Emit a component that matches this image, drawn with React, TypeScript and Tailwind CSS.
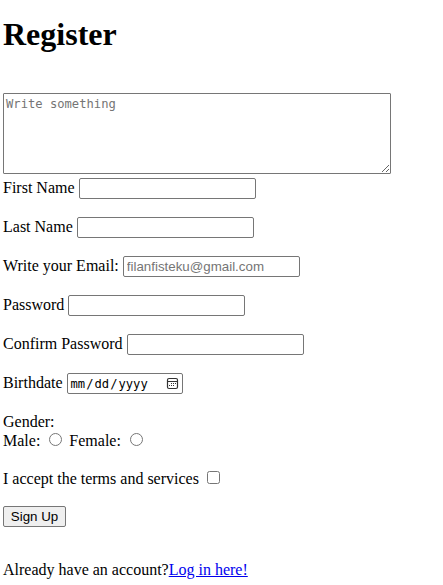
import type { InputHTMLAttributes } from 'react';

const fieldClass =
  'block h-[21px] w-[177px] rounded-[2px] border border-[#767676] bg-white px-[3px] font-["Liberation_Sans",Arial,sans-serif] text-[13.333px] leading-[15px] text-black outline-none placeholder:text-[#757575]';

type FieldProps = InputHTMLAttributes<HTMLInputElement> & { label: string };

function Field({ label, ...rest }: FieldProps) {
  return (
    <label className="flex h-[21px] w-fit gap-1">
      <span className="leading-[20px] whitespace-nowrap">{label}</span>
      <input className={fieldClass} {...rest} />
    </label>
  );
}

function CalendarIcon() {
  return (
    <svg className="mt-[3px] ml-auto size-[13px]" viewBox="0 0 13 13" fill="none" aria-hidden="true">
      <rect x="1.5" y="1.5" width="10" height="10" rx="1.5" stroke="#333" strokeWidth="1.2" />
      <path d="M1.5 4.5h10" stroke="#333" />
      <path d="M5 6.5h1M7 6.5h1M9 6.5h1M3 8.5h1M5 8.5h1M7 8.5h1" stroke="#333" />
    </svg>
  );
}

export default function App() {
  return (
    <main className='h-[585px] w-[443px] overflow-hidden bg-white pl-[3px] font-["Liberation_Serif","Times_New_Roman",serif] text-[16px] text-black'>
      <h1 className="pt-[16px] text-[32px] leading-[37px] font-bold">Register</h1>
      <form className="mt-[40px]" onSubmit={(e) => e.preventDefault()}>
        <textarea
          placeholder="Write something"
          className='block h-[81px] w-[388px] resize rounded-[1px] border border-[#767676] bg-white p-[2px] pt-[3px] font-["DejaVu_Sans_Mono",monospace] text-[12.17px] leading-[15px] outline-none placeholder:text-[#757575]'
        />
        <div className="mt-[4px] flex flex-col gap-[18px]">
          <Field label="First Name" type="text" />
          <Field label="Last Name" type="text" />
          <Field label="Write your Email:" type="email" placeholder="filanfisteku@gmail.com" />
          <Field label="Password" type="password" />
          <Field label="Confirm Password" type="password" />
          <div className="flex h-[21px] gap-1">
            <span className="leading-[20px]">Birthdate</span>
            <div className='flex h-[21px] w-[116px] rounded-[2px] border border-[#767676] px-[3px] font-["DejaVu_Sans_Mono",monospace] text-[12.17px] leading-[20px]'>
              <span>mm</span>
              <span className="px-[1px]">/</span>
              <span>dd</span>
              <span className="px-[1px]">/</span>
              <span>yyyy</span>
              <CalendarIcon />
            </div>
          </div>
        </div>
        <p className="mt-[18px] leading-[19px]">Gender:</p>
        <div className="flex h-[20px] leading-[20px]">
          <span>Male:</span>
          <input type="radio" name="gender" className="mt-[2px] ml-[9px] size-[13px]" />
          <span className="ml-[7px]">Female:</span>
          <input type="radio" name="gender" className="mt-[2px] ml-[9px] size-[13px]" />
        </div>
        <label className="mt-[18px] flex h-[20px] w-fit leading-[20px]">
          I accept the terms and services
          <input type="checkbox" className="mt-[2px] ml-[8px] size-[13px]" />
        </label>
        <button
          type="submit"
          className='mt-[17px] block h-[21px] w-[63px] rounded-[2px] border border-[#767676] bg-[#efefef] text-center font-["Liberation_Sans",Arial,sans-serif] text-[13.333px] leading-[19px]'
        >
          Sign Up
        </button>
      </form>
      <p className="mt-[34px] leading-[18px]">
        Already have an account?
        <a href="#" className="text-[#0000ee] underline">Log in here!</a>
      </p>
    </main>
  );
}
